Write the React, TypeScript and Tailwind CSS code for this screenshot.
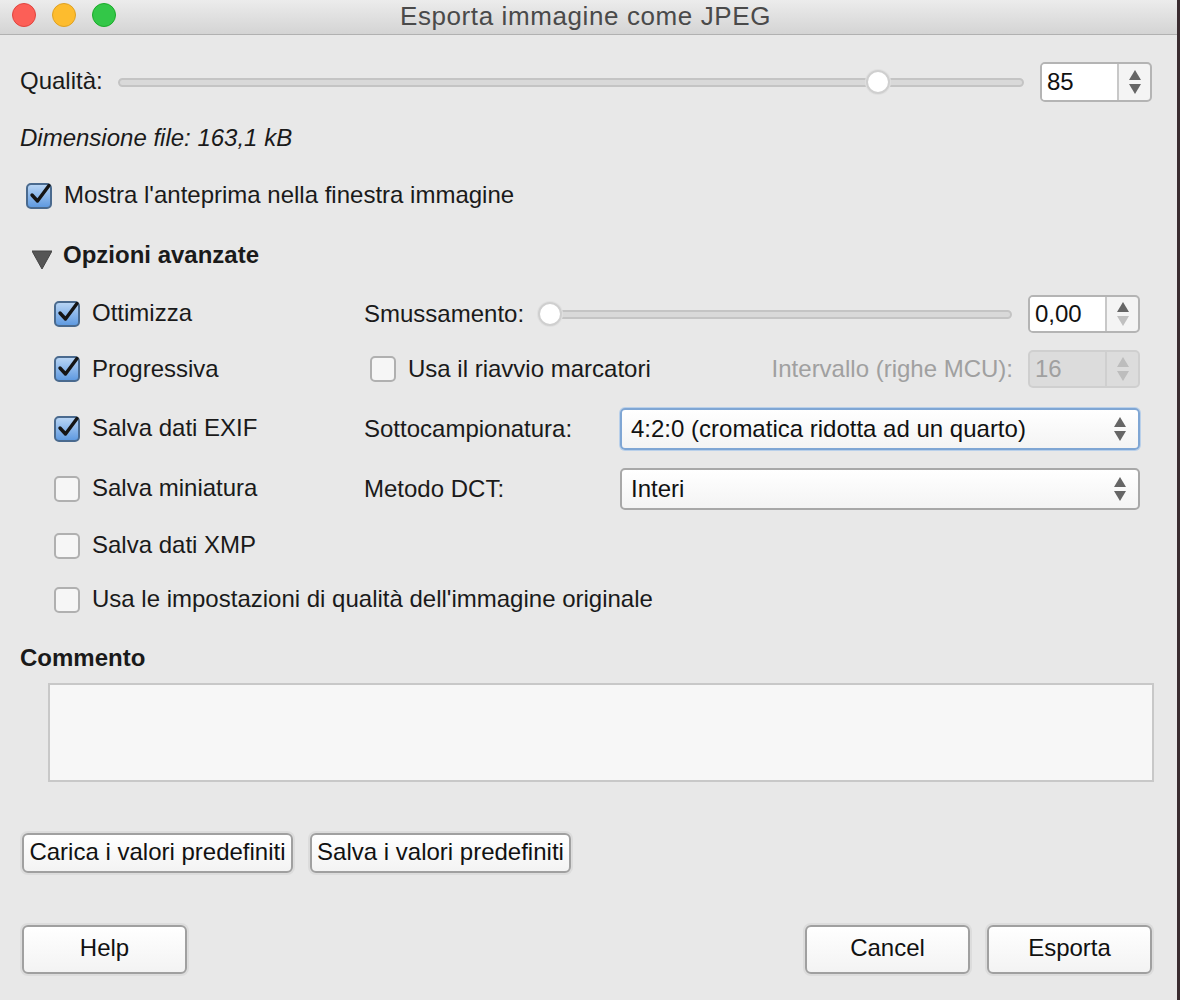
import React from "react";

const font = { fontFamily: '"Liberation Sans", Arial, sans-serif' };

function CheckBox({ checked }: { checked?: boolean }) {
  if (checked) {
    return (
      <div className="relative w-[26px] h-[26px] shrink-0 rounded-[5px] border-2 border-[#4a6a8e] bg-gradient-to-b from-[#b7d4f4] to-[#5f9ae0]">
        <svg width="26" height="26" viewBox="0 0 26 26" className="absolute left-[-1px] top-[-4px]">
          <path d="M5 14 L10.5 20 L22 4.5" fill="none" stroke="#151515" strokeWidth="3.4" strokeLinecap="round" strokeLinejoin="round" />
        </svg>
      </div>
    );
  }
  return (
    <div className="w-[26px] h-[26px] shrink-0 rounded-[5px] border-2 border-[#b0b0b0] bg-[#f6f6f6]" />
  );
}

function Slider({ pos }: { pos: number }) {
  return (
    <div className="relative flex-1 h-[26px] flex items-center">
      <div className="w-full h-[9px] rounded-full border-2 border-[#c4c4c4] bg-[#d9d9d9]" />
      <div
        className="absolute top-[1px] w-[24px] h-[24px] rounded-full bg-white border-2 border-[#cfcfcf] shadow-[0_0_0_1px_#e0e0e0]"
        style={{ left: `calc(${pos}% - 12px)` }}
      />
    </div>
  );
}

function Arrows({ up = "#666", down = "#666" }: { up?: string; down?: string }) {
  return (
    <div className="flex flex-col items-center gap-[4px]">
      <svg width="12" height="10" viewBox="0 0 12 10">
        <path d="M6 0 L12 10 L0 10 Z" fill={up} />
      </svg>
      <svg width="12" height="10" viewBox="0 0 12 10">
        <path d="M0 0 L12 0 L6 10 Z" fill={down} />
      </svg>
    </div>
  );
}

function SpinBox({
  value,
  h,
  disabled,
  upColor,
  downColor,
}: {
  value: string;
  h: string;
  disabled?: boolean;
  upColor?: string;
  downColor?: string;
}) {
  return (
    <div
      className={`w-[112px] ${h} shrink-0 flex rounded-[5px] border-2 ${
        disabled ? "border-[#cfcfcf] bg-[#dcdcdc]" : "border-[#b4b4b4] bg-[#f4f4f4]"
      }`}
    >
      <div
        className={`flex-1 flex items-center pl-[5px] text-[24px] ${
          disabled ? "text-[#a0a0a0]" : "text-[#111] bg-white rounded-l-[3px]"
        }`}
      >
        {value}
      </div>
      <div
        className={`w-[33px] flex items-center justify-center border-l-2 ${
          disabled ? "border-[#cfcfcf]" : "border-[#c8c8c8]"
        }`}
      >
        <Arrows up={upColor} down={downColor} />
      </div>
    </div>
  );
}

function Select({ text, focused }: { text: string; focused?: boolean }) {
  return (
    <div
      className={`flex-1 h-[42px] rounded-[5px] border-2 bg-gradient-to-b from-white to-[#f4f4f4] flex items-center justify-between pl-[9px] pr-[12px] text-[24px] text-[#111] ${
        focused ? "border-[#7fa6d4] shadow-[0_0_0_1px_#b9d0ea]" : "border-[#a8a8a8]"
      }`}
    >
      <span>{text}</span>
      <Arrows />
    </div>
  );
}

function Button({ children, w, h }: { children: React.ReactNode; w: string; h: string }) {
  return (
    <button
      className={`${w} ${h} shrink-0 rounded-[6px] border-2 border-[#a0a0a0] bg-gradient-to-b from-white to-[#f3f3f3] text-[24px] text-[#111] shadow-[0_0_0_2px_#dcdcdc] flex items-center justify-center whitespace-nowrap pb-[3px]`}
    >
      {children}
    </button>
  );
}

export default function App() {
  return (
    <div className="w-[1180px] h-[1000px] flex bg-[#3a2c30]" style={font}>
      <div className="w-[1177px] h-full bg-[#e8e8e8] flex flex-col">
        {/* Title bar */}
        <div className="h-[35px] shrink-0 relative flex items-center justify-center bg-gradient-to-b from-[#ececec] to-[#d4d4d4] border-b border-[#b1b1b1]">
          <div className="absolute left-[12px] top-[3px] flex gap-[16px]">
            <div className="w-[24px] h-[24px] rounded-full bg-[#fc5f57] border border-[#e0443e]" />
            <div className="w-[24px] h-[24px] rounded-full bg-[#fdbc2e] border border-[#dea123]" />
            <div className="w-[24px] h-[24px] rounded-full bg-[#33c748] border border-[#1aab29]" />
          </div>
          <span className="text-[26px] tracking-[0.6px] text-[#4a4a4a] -mt-[2px] -ml-[6px]">Esporta immagine come JPEG</span>
        </div>

        <div className="flex flex-col pl-[20px] pr-[25px] text-[24px] text-[#1a1a1a]">
          {/* Qualità */}
          <div className="mt-[27px] h-[40px] flex items-center">
            <span className="w-[98px] shrink-0 -mt-[2px]">Qualità:</span>
            <Slider pos={83.9} />
            <div className="w-[16px]" />
            <SpinBox value="85" h="h-[40px]" />
          </div>

          <div className="mt-[24px] h-[24px] flex items-center italic">Dimensione file: 163,1 kB</div>

          <div className="mt-[33px] h-[26px] flex items-center ml-[6px] gap-[12px]">
            <CheckBox checked />
            <span className="-mt-[2px]">Mostra l'anteprima nella finestra immagine</span>
          </div>

          <div className="mt-[34px] h-[24px] flex items-center ml-[12px] gap-[11px]">
            <svg width="20" height="20" viewBox="0 0 20 20" className="mt-[8px]">
              <path d="M0 2 L20 2 L10 20 Z" fill="#555" stroke="#444" strokeWidth="1" />
            </svg>
            <span className="font-bold">Opzioni avanzate</span>
          </div>

          {/* Advanced grid */}
          <div className="flex flex-col mt-[27px] mr-[12px]">
            <div className="h-[40px] flex items-center">
              <div className="w-[344px] pl-[34px] flex items-center gap-[12px]">
                <CheckBox checked />
                <span className="-mt-[3px]">Ottimizza</span>
              </div>
              <div className="flex-1 flex items-center">
                <span className="w-[176px] shrink-0">Smussamento:</span>
                <Slider pos={2.1} />
                <div className="w-[16px]" />
                <SpinBox value="0,00" h="h-[38px]" upColor="#666" downColor="#c0c0c0" />
              </div>
            </div>

            <div className="mt-[15px] h-[40px] flex items-center">
              <div className="w-[344px] pl-[34px] flex items-center gap-[12px]">
                <CheckBox checked />
                <span>Progressiva</span>
              </div>
              <div className="flex-1 flex items-center">
                <div className="ml-[6px] flex items-center gap-[12px]">
                  <CheckBox />
                  <span>Usa il riavvio marcatori</span>
                </div>
                <span className="ml-auto mr-[15px] text-[#a0a0a0]">Intervallo (righe MCU):</span>
                <SpinBox value="16" h="h-[38px]" disabled upColor="#bdbdbd" downColor="#bdbdbd" />
              </div>
            </div>

            <div className="mt-[19px] h-[42px] flex items-center">
              <div className="w-[344px] pl-[34px] flex items-center gap-[12px]">
                <CheckBox checked />
                <span className="-mt-[3px]">Salva dati EXIF</span>
              </div>
              <div className="flex-1 flex items-center">
                <span className="w-[256px] shrink-0">Sottocampionatura:</span>
                <Select text="4:2:0 (cromatica ridotta ad un quarto)" focused />
              </div>
            </div>

            <div className="mt-[18px] h-[42px] flex items-center">
              <div className="w-[344px] pl-[34px] flex items-center gap-[12px]">
                <CheckBox />
                <span className="-mt-[3px]">Salva miniatura</span>
              </div>
              <div className="flex-1 flex items-center">
                <span className="w-[256px] shrink-0">Metodo DCT:</span>
                <Select text="Interi" />
              </div>
            </div>

            <div className="mt-[16px] h-[40px] flex items-center pl-[34px] gap-[12px]">
              <CheckBox />
              <span className="-mt-[2px]">Salva dati XMP</span>
            </div>

            <div className="mt-[14px] h-[40px] flex items-center pl-[34px] gap-[12px]">
              <CheckBox />
              <span className="-mt-[2px]">Usa le impostazioni di qualità dell'immagine originale</span>
            </div>
          </div>

          <div className="mt-[26px] h-[24px] flex items-center font-bold">Commento</div>

          <div className="mt-[13px] ml-[28px] mr-[-2px] h-[99px] border-2 border-[#c8c8c8] bg-[#f7f7f7]" />

          <div className="mt-[51px] flex gap-[17px] ml-[2px]">
            <Button w="w-[271px]" h="h-[40px]">Carica i valori predefiniti</Button>
            <Button w="w-[261px]" h="h-[40px]">Salva i valori predefiniti</Button>
          </div>

          <div className="mt-[52px] flex ml-[2px]">
            <Button w="w-[165px]" h="h-[49px]">Help</Button>
            <div className="flex-1" />
            <Button w="w-[165px]" h="h-[49px]">Cancel</Button>
            <div className="w-[17px]" />
            <Button w="w-[165px]" h="h-[49px]">Esporta</Button>
          </div>
        </div>
      </div>
    </div>
  );
}
